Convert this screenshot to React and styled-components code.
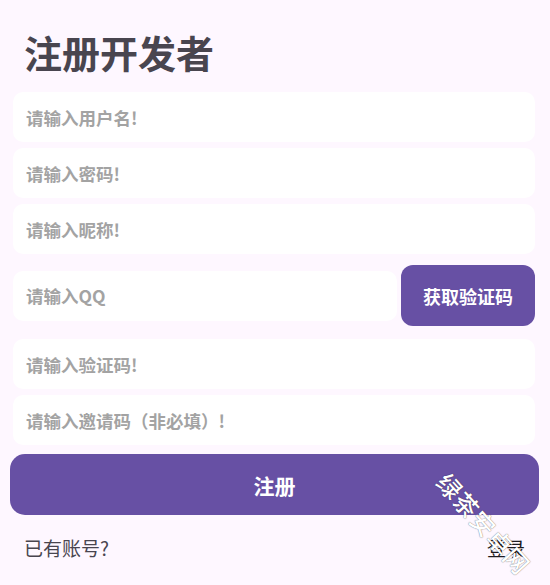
import React from 'react';
import styled, { createGlobalStyle } from 'styled-components';

const GlobalStyle = createGlobalStyle`
  html, body {
    margin: 0;
    padding: 0;
    background: #fef7ff;
  }
  body {
    font-family: "Noto Sans CJK SC", "Noto Sans", sans-serif;
  }
`;

const Page = styled.div`
  position: relative;
  width: 550px;
  height: 585px;
  overflow: hidden;
  box-sizing: border-box;
  padding: 0 15px 0 13px;
  background: #fef7ff;
`;

const Title = styled.h1`
  margin: 0 0 15px;
  padding: 27px 0 0 11px;
  font-size: 38px;
  line-height: 50px;
  font-weight: 700;
  color: #49454f;
`;

const Form = styled.div`
  display: flex;
  flex-direction: column;
  gap: 6px;
`;

const Field = styled.input`
  box-sizing: border-box;
  width: 100%;
  height: 50px;
  border: none;
  outline: none;
  border-radius: 10px;
  background: #ffffff;
  padding: 0 13px;
  font-family: inherit;
  font-size: 17.5px;
  font-weight: 600;
  color: #1d1b20;

  &::placeholder {
    color: #a3a3a3;
  }
`;

const CodeRow = styled.div`
  display: flex;
  align-items: center;
  gap: 4px;
  margin: 5px 0 7px;
`;

const CodeButton = styled.button`
  flex: 0 0 134px;
  height: 61px;
  border: none;
  border-radius: 12px;
  background: #6750a4;
  color: #ffffff;
  font-family: inherit;
  font-size: 18px;
  font-weight: 700;
`;

const SubmitButton = styled.button`
  margin: 3px -4px 0 -3px;
  height: 61px;
  border: none;
  border-radius: 15px;
  background: #6750a4;
  color: #ffffff;
  font-family: inherit;
  font-size: 21px;
  font-weight: 700;
`;

const Footer = styled.div`
  display: flex;
  justify-content: space-between;
  align-items: center;
  padding: 21px 10px 0 11px;
  font-size: 19px;
  line-height: 24px;
  color: #49454f;
`;

const Link = styled.span`
  color: #1d1b20;
`;

const Watermark = styled.div`
  position: absolute;
  left: 442px;
  top: 462px;
  transform: rotate(48deg);
  transform-origin: left center;
  font-size: 24px;
  line-height: 30px;
  font-weight: 500;
  letter-spacing: 1px;
  color: #ffffff;
  white-space: nowrap;
  text-shadow: 0 0 1px rgba(0, 0, 0, 0.7);
  pointer-events: none;
`;

const App = () => {
  return (
    <Page>
      <GlobalStyle />
      <Title>注册开发者</Title>
      <Form>
        <Field placeholder="请输入用户名!" />
        <Field placeholder="请输入密码!" type="password" />
        <Field placeholder="请输入昵称!" />
        <CodeRow>
          <Field placeholder="请输入QQ" />
          <CodeButton>获取验证码</CodeButton>
        </CodeRow>
        <Field placeholder="请输入验证码!" />
        <Field placeholder="请输入邀请码（非必填）!" />
        <SubmitButton>注册</SubmitButton>
      </Form>
      <Footer>
        <span>已有账号?</span>
        <Link>登录</Link>
      </Footer>
      <Watermark>绿茶安卓网</Watermark>
    </Page>
  );
};

export default App;
